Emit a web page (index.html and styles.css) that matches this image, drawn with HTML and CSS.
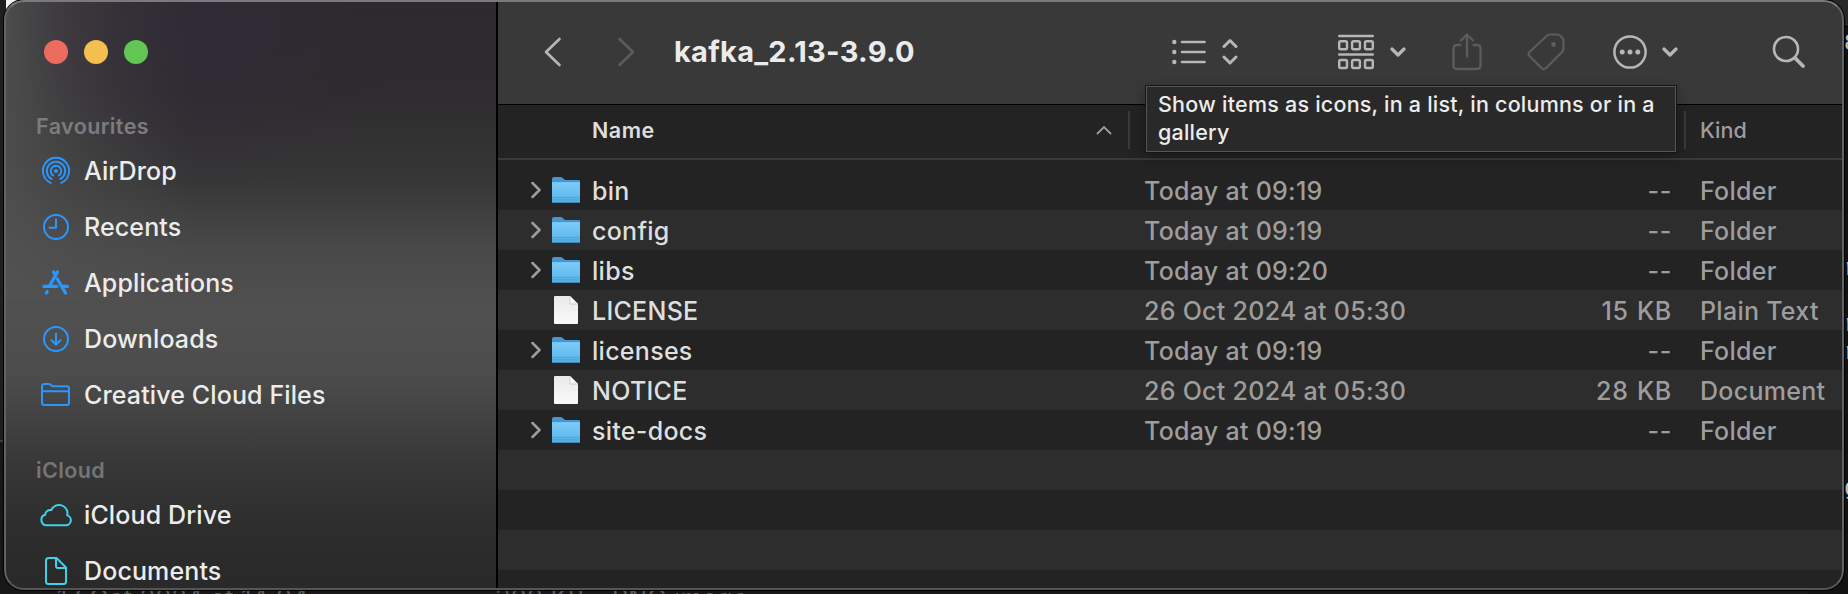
FILE: index.html
```html
<!DOCTYPE html>
<html lang="en">
<head>
<meta charset="utf-8">
<title>kafka_2.13-3.9.0</title>
<link rel="stylesheet" href="styles.css">
</head>
<body>
<svg class="defs" width="0" height="0" aria-hidden="true">
  <defs>
    <linearGradient id="folder-face" x1="0" y1="0" x2="0" y2="1">
      <stop offset="0" stop-color="#7bcbf8"/><stop offset="0.6" stop-color="#67bdf0"/><stop offset="1" stop-color="#55addf"/>
    </linearGradient>
    <linearGradient id="paper" x1="0" y1="0" x2="0" y2="1">
      <stop offset="0" stop-color="#e9e9e9"/><stop offset="1" stop-color="#fafafa"/>
    </linearGradient>
    <symbol id="folder" viewBox="0 0 28 27">
      <path d="M0 2Q0 0 2 0H8.500Q10 0 11 1.200T13.500 3H27Q28 3 28 4V12H0Z" fill="#4596d3"/>
      <path d="M0 5.500H28V25Q28 26 27 26H1Q0 26 0 25Z" fill="url(#folder-face)"/>
      <path d="M0 5.800H28" stroke="#8ad3fa" stroke-width="0.800"/>
      <path d="M0 20.500H28M0 22.800H28" stroke="#4b9fd6" stroke-width="0.800"/>
      <path d="M0.300 25.500H27.700" stroke="#3b88c0" stroke-width="1"/>
    </symbol>
    <symbol id="file" viewBox="0 0 24 28">
      <path d="M0 1Q0 0 1 0H16L24 8V27Q24 28 23 28H1Q0 28 0 27Z" fill="url(#paper)"/>
      <path d="M16 0V8H24Z" fill="#fff" stroke="#bdbdbd" stroke-width="0.700"/>
    </symbol>
    <symbol id="disclosure" viewBox="0 0 10 18">
      <path d="M1.500 2L8.500 9L1.500 16" fill="none" stroke="currentColor" stroke-width="2.500" stroke-linecap="round" stroke-linejoin="round"/>
    </symbol>
    <symbol id="chevron" viewBox="0 0 16 10">
      <path d="M2 2L8 8L14 2" fill="none" stroke="currentColor" stroke-width="3.200" stroke-linecap="round" stroke-linejoin="round"/>
    </symbol>
  </defs>
</svg>

<div class="desktop">
  <div class="behind-edge"></div>
  <div class="behind-left"></div>
  <div class="behind-right"></div>
  <span class="behind-text behind-date">17 Oct 2024 at 14:04</span>
  <span class="behind-text behind-size">300 KB</span>
  <span class="behind-text behind-kind">PNG image</span>
  <span class="side-text side-a">8</span>
  <span class="side-text side-b">r</span>
  <span class="side-text side-c">r</span>
  <span class="side-text side-d">r</span>
  <span class="side-text side-e">g</span>

  <div class="window">
    <aside class="sidebar">
      <div class="lights"><i class="red"></i><i class="yellow"></i><i class="green"></i></div>
      <h2 class="group">Favourites</h2>
      <ul class="places">
        <li><svg class="icon" viewBox="0 0 32 32"><g fill="none" stroke="currentColor" stroke-width="1.900" stroke-linecap="round"><path d="M10.700 27.900A13.100 13.100 0 1 1 21.300 27.900"/><path d="M11.700 24.100A9.200 9.200 0 1 1 20.300 24.100"/><path d="M13.200 20.500A5.300 5.300 0 1 1 18.800 20.500"/></g><circle cx="16" cy="16" r="2" fill="currentColor"/></svg><span>AirDrop</span></li>
        <li><svg class="icon" viewBox="0 0 32 32"><g fill="none" stroke="currentColor" stroke-width="2" stroke-linecap="round" stroke-linejoin="round"><circle cx="16" cy="16" r="12"/><path d="M16 8.500V16.700H9.500"/></g></svg><span>Recents</span></li>
        <li><svg class="icon" viewBox="0 0 32 32"><g fill="none" stroke="currentColor" stroke-width="3.200" stroke-linecap="round"><path d="M17.500 5L10 18M13.500 5L15.500 8M17.300 12L25.500 26M3.700 19.300H17M22.500 19.300H27.500M7.200 24.500L6.300 26"/></g></svg><span>Applications</span></li>
        <li><svg class="icon" viewBox="0 0 32 32"><g fill="none" stroke="currentColor" stroke-width="2" stroke-linecap="round" stroke-linejoin="round"><circle cx="16" cy="16" r="12"/><path d="M16 10.500V21.500M11.500 17.200L16 21.700L20.500 17.200"/></g></svg><span>Downloads</span></li>
        <li><svg class="icon" viewBox="0 0 32 32"><path d="M2 24V7.500Q2 5 4.500 5H8.500Q9.800 5 10.800 6T13 7.200H26.500Q29 7.200 29 9.500V23.500Q29 26 26.500 26H4.500Q2 26 2 23.500M2 12.200H29" fill="none" stroke="currentColor" stroke-width="2"/></svg><span>Creative Cloud Files</span></li>
      </ul>
      <h2 class="group group-icloud">iCloud</h2>
      <ul class="places places-icloud">
        <li><svg class="icon" viewBox="0 0 32 32"><path d="M6.500 26.200H25.500A5 5 0 0 0 27.200 16.400A8.400 8.400 0 0 0 11.300 11.100A4.700 4.700 0 0 0 5.300 15.800A5.300 5.300 0 0 0 6.500 26.200Z" fill="none" stroke="currentColor" stroke-width="2" stroke-linejoin="round"/></svg><span>iCloud Drive</span></li>
        <li><svg class="icon" viewBox="0 0 32 32"><path d="M8.500 3H16.500L26 12.500V26.500Q26 29 23.500 29H8.500Q6 29 6 26.500V5.500Q6 3 8.500 3ZM16 3.500V11Q16 13 18 13H25.500" fill="none" stroke="currentColor" stroke-width="2" stroke-linejoin="round"/></svg><span>Documents</span></li>
      </ul>
    </aside>

    <main class="content">
      <header class="toolbar">
        <svg class="back" width="18" height="30" viewBox="0 0 18 30"><path d="M15.500 2L2 15L15.500 28" fill="none" stroke="currentColor" stroke-width="2.600" stroke-linecap="round" stroke-linejoin="round"/></svg>
        <svg class="forward dim" width="18" height="30" viewBox="0 0 18 30"><path d="M2.500 2L16 15L2.500 28" fill="none" stroke="currentColor" stroke-width="2.600" stroke-linecap="round" stroke-linejoin="round"/></svg>
        <h1 class="title">kafka_2.13-3.9.0</h1>
        <div class="tools">
          <svg class="view-list" width="34" height="26" viewBox="0 0 34 26"><g fill="currentColor"><circle cx="2.300" cy="3" r="2.200"/><circle cx="2.300" cy="13" r="2.200"/><circle cx="2.300" cy="23" r="2.200"/></g><path d="M10 3H32.500M10 13H32.500M10 23H32.500" stroke="currentColor" stroke-width="2.600" stroke-linecap="round"/></svg>
          <svg class="updown" width="16" height="28" viewBox="0 0 16 28"><path d="M2 8.500L8 2.500L14 8.500M2 19L8 25L14 19" fill="none" stroke="currentColor" stroke-width="3" stroke-linecap="round" stroke-linejoin="round"/></svg>
          <svg class="group-by" width="36" height="36" viewBox="0 0 36 36"><g fill="none" stroke="currentColor" stroke-width="2.400" stroke-linecap="round"><path d="M1.200 2H34.800M1.200 20.500H34.800"/><rect x="1.200" y="7.300" width="7.800" height="8" rx="1.500"/><rect x="14.100" y="7.300" width="7.800" height="8" rx="1.500"/><rect x="27" y="7.300" width="7.800" height="8" rx="1.500"/><rect x="1.200" y="26" width="7.800" height="8" rx="1.500"/><rect x="14.100" y="26" width="7.800" height="8" rx="1.500"/><rect x="27" y="26" width="7.800" height="8" rx="1.500"/></g></svg>
          <svg class="group-chevron" width="16" height="10"><use href="#chevron"/></svg>
          <svg class="share dim" width="30" height="38" viewBox="0 0 30 38"><path d="M8.500 12H5Q1.500 12 1.500 15.500V32.500Q1.500 36 5 36H25Q28.500 36 28.500 32.500V15.500Q28.500 12 25 12H21.500M15 23.500V2M9 7.500L15 1.500L21 7.500" fill="none" stroke="currentColor" stroke-width="2.300" stroke-linecap="round" stroke-linejoin="round"/></svg>
          <svg class="tag dim" width="38" height="38" viewBox="0 0 38 38"><path d="M19.500 3Q21 1.500 23 1.500H30Q32 1.500 33.300 2.800L35.500 5Q36.500 6.300 36.500 8V15Q36.500 17.500 35 19L19 35.200Q16.800 37 14.500 35L2.500 23Q.700 21 2.500 19Z" fill="none" stroke="currentColor" stroke-width="2.200" stroke-linejoin="round"/><circle cx="26.500" cy="11.500" r="2.400" fill="currentColor"/></svg>
          <svg class="more" width="34" height="34" viewBox="0 0 34 34"><circle cx="17" cy="17" r="15.600" fill="none" stroke="currentColor" stroke-width="2.500"/><g fill="currentColor"><circle cx="9.200" cy="17" r="2.500"/><circle cx="17" cy="17" r="2.500"/><circle cx="24.800" cy="17" r="2.500"/></g></svg>
          <svg class="more-chevron" width="16" height="10"><use href="#chevron"/></svg>
          <svg class="search" width="34" height="34" viewBox="0 0 34 34"><circle cx="14" cy="14" r="12" fill="none" stroke="currentColor" stroke-width="2.600"/><path d="M23.500 23.500L31 31" stroke="currentColor" stroke-width="3.800" stroke-linecap="round"/></svg>
        </div>
      </header>

      <div class="columns">
        <span class="col-name">Name</span>
        <svg class="sort" width="16" height="10" viewBox="0 0 16 10"><path d="M1.500 8.500L8 2L14.500 8.500" fill="none" stroke="currentColor" stroke-width="1.800" stroke-linecap="round"/></svg>
        <i class="divider divider-date"></i>
        <i class="divider divider-kind"></i>
        <span class="col-kind">Kind</span>
      </div>

      <div class="rows">
        <div class="row"><svg class="arrow"><use href="#disclosure"/></svg><svg class="folder"><use href="#folder"/></svg><span class="name">bin</span><span class="date">Today at 09:19</span><span class="size">--</span><span class="kind">Folder</span></div>
        <div class="row"><svg class="arrow"><use href="#disclosure"/></svg><svg class="folder"><use href="#folder"/></svg><span class="name">config</span><span class="date">Today at 09:19</span><span class="size">--</span><span class="kind">Folder</span></div>
        <div class="row"><svg class="arrow"><use href="#disclosure"/></svg><svg class="folder"><use href="#folder"/></svg><span class="name">libs</span><span class="date">Today at 09:20</span><span class="size">--</span><span class="kind">Folder</span></div>
        <div class="row"><i></i><svg class="file"><use href="#file"/></svg><span class="name">LICENSE</span><span class="date">26 Oct 2024 at 05:30</span><span class="size">15 KB</span><span class="kind">Plain Text</span></div>
        <div class="row"><svg class="arrow"><use href="#disclosure"/></svg><svg class="folder"><use href="#folder"/></svg><span class="name">licenses</span><span class="date">Today at 09:19</span><span class="size">--</span><span class="kind">Folder</span></div>
        <div class="row"><i></i><svg class="file"><use href="#file"/></svg><span class="name">NOTICE</span><span class="date">26 Oct 2024 at 05:30</span><span class="size">28 KB</span><span class="kind">Document</span></div>
        <div class="row"><svg class="arrow"><use href="#disclosure"/></svg><svg class="folder"><use href="#folder"/></svg><span class="name">site-docs</span><span class="date">Today at 09:19</span><span class="size">--</span><span class="kind">Folder</span></div>
        <div class="row"></div>
        <div class="row"></div>
        <div class="row"></div>
        <div class="row"></div>
      </div>
    </main>
  </div>

  <div class="tooltip" role="tooltip">Show items as icons, in a list, in columns or in a<br>gallery</div>
</div>
</body>
</html>
```
FILE: styles.css
```css
* { box-sizing: border-box; }

body {
  margin: 0;
  font-family: Inter, "Liberation Sans", sans-serif;
  background: #171717;
}

.defs { position: absolute; }

.desktop {
  position: relative;
  width: 1848px;
  height: 594px;
  overflow: hidden;
  background: #171717;
}

/* Windows lying behind the front one */
.behind-edge {
  position: absolute;
  left: 6px;
  top: 0;
  width: 30px;
  height: 30px;
  background: #f2f2f2;
}
.behind-left {
  position: absolute;
  left: 0;
  top: 0;
  width: 6px;
  height: 442px;
  border-bottom: 2px solid #3c3c3c;
  background: #1e1e1e;
}
.behind-right {
  position: absolute;
  right: 0;
  top: 0;
  width: 40px;
  height: 594px;
  background: linear-gradient(180deg, #272727 0 26px, #000 26px 27px, #121212 27px);
}
.behind-text {
  position: absolute;
  top: 583px;
  font-size: 25px;
  line-height: 30px;
  letter-spacing: 0.4px;
  color: #5c5c5c;
  white-space: nowrap;
}
.behind-date { left: 57px; }
.behind-size { left: 495px; }
.behind-kind { left: 612px; }
.side-text {
  position: absolute;
  left: 1844px;
  font: 24px/28px "Liberation Mono", monospace;
  color: #c4c4c4;
}
.side-a { top: 30px; }
.side-b { top: 255px; }
.side-c { top: 311px; }
.side-d { top: 339px; }
.side-e { top: 475px; }

.window {
  position: absolute;
  left: 4px;
  top: 0;
  width: 1840px;
  height: 590px;
  display: flex;
  overflow: hidden;
  border-radius: 20px;
  background: #232323;
  box-shadow: 0 0 0 1px #000;
}
.window::after {
  content: "";
  position: absolute;
  inset: 0;
  border: 2px solid #626262;
  border-top-color: #7a7a7a;
  border-bottom-color: #555;
  border-radius: 20px;
  pointer-events: none;
}

/* Sidebar */
.sidebar {
  width: 494px;
  flex: none;
  padding: 40px 0 0 32px;
  border-right: 2px solid #000;
  background:
    radial-gradient(ellipse 200px 200px at 205px 0, rgba(50, 42, 58, 0.75), rgba(50, 42, 58, 0)),
    linear-gradient(90deg, rgba(82, 82, 82, 0.85) 0, rgba(82, 82, 82, 0.5) 60px, rgba(82, 82, 82, 0) 190px) 0 0 / 100% 300px no-repeat,
    linear-gradient(180deg, #2c2a2c 0, #2e2c2e 95px, #373737 180px, #494949 250px, #505050 310px, #4d4d4d 370px, #444 410px, #373737 465px, #2d2d2d 530px, #292929 590px);
}
.lights { display: flex; gap: 16px; padding-left: 8px; }
.lights i { width: 24px; height: 24px; border-radius: 50%; }
.red { background: #ed6a5f; }
.yellow { background: #f5bf4f; }
.green { background: #62c655; }

.group {
  margin: 48px 0 0;
  font-size: 21.500px;
  line-height: 28px;
  font-weight: 600;
  letter-spacing: 0.4px;
  color: #7d7b7d;
}
.places { margin: 3px 0 0; padding: 0; list-style: none; color: #2997ff; }
.places li { display: flex; align-items: center; height: 56px; }
.places .icon { width: 32px; height: 32px; margin-left: 4px; flex: none; }
.places span {
  margin-left: 12px;
  font-size: 25px;
  font-weight: 500;
  line-height: 32px;
  letter-spacing: 0.12px;
  color: #ececec;
  white-space: nowrap;
}
.group-icloud { margin-top: 33px; color: #757575; }
.places-icloud { margin-top: 3px; color: #3dd2ea; }

/* Toolbar */
.content { flex: 1; min-width: 0; display: flex; flex-direction: column; }
.toolbar {
  height: 105px;
  flex: none;
  display: flex;
  align-items: center;
  padding: 0 0 1px 46px;
  border-bottom: 1px solid #000;
  background: #393939;
  color: #b7b7b7;
}
.toolbar svg { flex: none; }
.toolbar .dim { color: #5c5c5c; }
.forward { margin-left: 55px; }
.title {
  width: 300px;
  margin: 0 0 0 39px;
  font-size: 29px;
  line-height: 36px;
  font-weight: 700;
  letter-spacing: 0.28px;
  color: #ebebeb;
  white-space: nowrap;
}
.tools { display: flex; align-items: center; margin-left: auto; padding-right: 38px; }
.updown { margin-left: 16px; }
.group-by { margin-left: 100px; }
.group-chevron { margin-left: 16px; }
.share { margin-left: 46px; }
.tag { margin-left: 45px; }
.more { margin-left: 48px; }
.more-chevron { margin-left: 15px; }
.search { margin-left: 94px; }

/* Column headings */
.columns {
  height: 55px;
  flex: none;
  display: flex;
  align-items: center;
  padding: 0 0 3px 94px;
  border-bottom: 2px solid #3a3a3a;
  font-size: 21.500px;
  color: #9d9d9d;
}
.col-name { width: 504px; font-weight: 600; letter-spacing: 0.5px; color: #dedede; }
.sort { flex: none; color: #9d9d9d; }
.divider { width: 2px; height: 38px; flex: none; background: #3a3a3a; }
.divider-date { margin-left: 16px; }
.divider-kind { margin-left: 554px; }
.col-kind { margin-left: 14px; font-weight: 500; }

/* File list */
.rows { padding-top: 10px; }
.row {
  display: grid;
  grid-template-columns: 26px 40px 552px 400px 128px 1fr;
  align-items: center;
  height: 40px;
  padding-left: 28px;
  font-size: 25px;
  font-weight: 450;
  line-height: 30px;
  letter-spacing: 0.28px;
  color: #9d9d9d;
  white-space: nowrap;
}
.row:nth-child(even) { background: #2d2d2d; }
.row span { padding-top: 2px; }
.arrow { width: 10px; height: 18px; margin-left: 5px; }
.folder { width: 28px; height: 27px; }
.file { width: 24px; height: 28px; margin-left: 2px; }
.name { color: #dedede; }
.size { text-align: right; letter-spacing: 0.7px; word-spacing: 1px; }
.kind { padding-left: 28px; }

.tooltip {
  position: absolute;
  left: 1146px;
  top: 86px;
  width: 530px;
  height: 66px;
  padding: 3px 11px;
  border: 1px solid #565656;
  background: #292929;
  box-shadow: 0 0 0 1px #161616, 0 4px 14px rgba(0, 0, 0, 0.35);
  font-size: 21.500px;
  line-height: 28px;
  font-weight: 500;
  letter-spacing: 0.22px;
  color: #ececec;
  white-space: nowrap;
}
```
